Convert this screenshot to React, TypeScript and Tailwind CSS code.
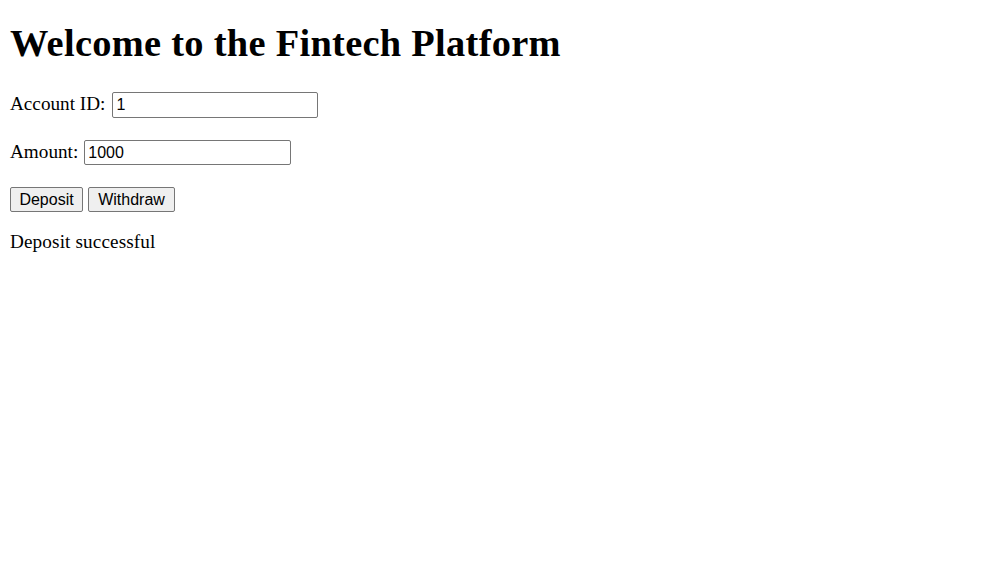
export default function App() {
  return (
    <div className="px-[10px] text-black font-['Liberation_Serif',serif] text-[19.2px] bg-white min-h-[565px]">
      <h1 className="text-[38.4px] font-bold leading-[44px] mt-0 pt-[21px] tracking-[0.3px]">
        Welcome to the Fintech Platform
      </h1>
      <div className="mt-[27px] flex items-baseline gap-[7px] h-[26px]">
        <span className="leading-[22px]">Account ID:</span>
        <input
          defaultValue="1"
          className="w-[206px] h-[26px] border border-[#767676] rounded-[2px] px-[3px] text-[16px] font-['Liberation_Sans',Arial,sans-serif] text-black outline-none"
        />
      </div>
      <div className="mt-[22px] flex items-baseline gap-[6px] h-[25px]">
        <span className="leading-[22px]">Amount:</span>
        <input
          defaultValue="1000"
          className="w-[207px] h-[25px] border border-[#767676] rounded-[2px] px-[3px] text-[16px] font-['Liberation_Sans',Arial,sans-serif] text-black outline-none"
        />
      </div>
      <div className="mt-[22px] flex gap-[5px]">
        <button className="w-[73px] h-[25px] border border-[#767676] rounded-[2px] bg-[#efefef] text-[16px] font-['Liberation_Sans',Arial,sans-serif] text-black">
          Deposit
        </button>
        <button className="w-[87px] h-[25px] border border-[#767676] rounded-[2px] bg-[#efefef] text-[16px] font-['Liberation_Sans',Arial,sans-serif] text-black">
          Withdraw
        </button>
      </div>
      <p className="mt-[19px] leading-[22px] tracking-[0.12px]">Deposit successful</p>
    </div>
  );
}
